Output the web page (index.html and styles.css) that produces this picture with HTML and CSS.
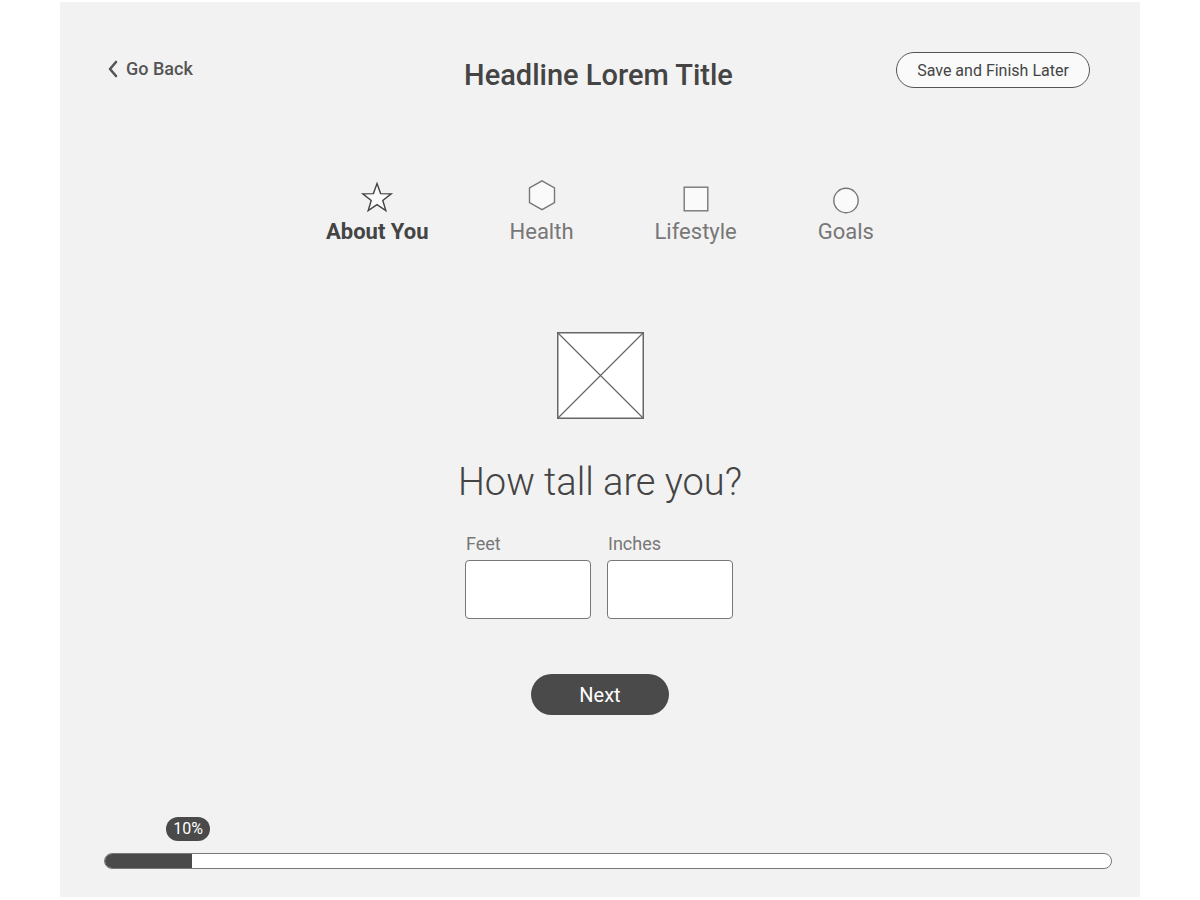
FILE: index.html
```html
<!DOCTYPE html>
<html lang="en">
<head>
    <meta charset="UTF-8">
    <meta name="viewport" content="width=device-width, initial-scale=1.0">
    <title>Headline Lorem Title</title>
    <link rel="stylesheet" href="styles.css">
</head>
<body>
    <div class="panel">
        <header class="top-bar">
            <a class="back-link" href="#">
                <svg width="12" height="18" viewBox="0 0 12 18"><path d="M9 2 L3 9 L9 16" fill="none" stroke="#555" stroke-width="2.6" stroke-linecap="round" stroke-linejoin="round"/></svg>
                Go Back
            </a>
            <h1 class="title">Headline Lorem Title</h1>
            <div class="top-right">
                <button type="button" class="save-btn">Save and Finish Later</button>
            </div>
        </header>

        <nav class="steps">
            <div class="step active">
                <svg width="34" height="34" viewBox="0 0 34 34"><polygon points="17,3.5 20.6,13.6 31.2,13.9 22.8,20.4 25.8,30.6 17,24.6 8.2,30.6 11.2,20.4 2.8,13.9 13.4,13.6" fill="#fafafa" stroke="#444" stroke-width="1.4" stroke-linejoin="miter"/></svg>
                <span>About You</span>
            </div>
            <div class="step">
                <svg width="34" height="34" viewBox="0 0 34 34"><polygon points="17,0.8 29.5,8 29.5,22.5 17,29.7 4.5,22.5 4.5,8" fill="#fafafa" stroke="#777" stroke-width="1.4"/></svg>
                <span>Health</span>
            </div>
            <div class="step">
                <svg width="34" height="34" viewBox="0 0 34 34"><rect x="5.2" y="7.2" width="23.6" height="23.6" fill="#fafafa" stroke="#777" stroke-width="1.4"/></svg>
                <span>Lifestyle</span>
            </div>
            <div class="step">
                <svg width="34" height="34" viewBox="0 0 34 34"><circle cx="17" cy="20.5" r="12.2" fill="#fafafa" stroke="#777" stroke-width="1.4"/></svg>
                <span>Goals</span>
            </div>
        </nav>

        <main class="question-block">
            <div class="placeholder">
                <svg width="87" height="87" viewBox="0 0 87 87"><rect x="0.75" y="0.75" width="85.5" height="85.5" fill="#fff" stroke="#666" stroke-width="1.5"/><path d="M1 1 L86 86 M86 1 L1 86" stroke="#666" stroke-width="1.2"/></svg>
            </div>
            <h2 class="question">How tall are you?</h2>
            <div class="fields">
                <label class="field">
                    <span>Feet</span>
                    <input type="text">
                </label>
                <label class="field">
                    <span>Inches</span>
                    <input type="text">
                </label>
            </div>
            <button type="button" class="next-btn">Next</button>
        </main>

        <footer class="progress">
            <div class="progress-badge">10%</div>
            <div class="progress-bar">
                <div class="progress-fill" style="width: 87px"></div>
            </div>
        </footer>
    </div>
</body>
</html>
```

FILE: styles.css
```css
body {
    margin: 0;
    background: #fff;
    font-family: Roboto, "Liberation Sans", Arial, sans-serif;
    color: #444;
}
.panel {
    width: 1080px;
    height: 895px;
    margin: 2px 0 0 60px;
    background: #f2f2f2;
    display: flex;
    flex-direction: column;
    box-sizing: border-box;
}
.top-bar {
    display: grid;
    grid-template-columns: 1fr auto 1fr;
    align-items: start;
    margin-top: 50px;
    padding: 0 50px 0 47px;
}
.back-link {
    display: flex;
    align-items: center;
    gap: 7px;
    margin-top: 6px;
    color: #555;
    font-size: 18px;
    line-height: 21px;
    font-weight: 500;
    text-decoration: none;
}
.title {
    margin: 6px 0 0;
    font-size: 29px;
    line-height: 34px;
    font-weight: 500;
    color: #444;
    text-align: center;
}
.top-right {
    display: flex;
    justify-content: flex-end;
}
.save-btn {
    height: 36px;
    width: 194px;
    border: 1px solid #555;
    border-radius: 18px;
    background: #fafafa;
    color: #444;
    font-family: inherit;
    font-size: 16px;
    padding: 0;
}
.steps {
    display: flex;
    justify-content: center;
    gap: 81px;
    margin-top: 88px;
}
.step {
    display: flex;
    flex-direction: column;
    align-items: center;
}
.step svg {
    display: block;
}
.step span {
    margin-top: 5px;
    font-size: 22px;
    line-height: 26px;
    color: #777;
}
.step.active span {
    font-weight: 700;
    color: #444;
}
.question-block {
    display: flex;
    flex-direction: column;
    align-items: center;
    margin-top: 87px;
}
.placeholder svg {
    display: block;
}
.question {
    margin: 40px 0 0;
    font-size: 38px;
    line-height: 46px;
    font-weight: 300;
    color: #444;
}
.fields {
    display: flex;
    gap: 16px;
    margin-top: 28px;
    margin-right: 2px;
}
.field {
    display: flex;
    flex-direction: column;
}
.field span {
    font-size: 18px;
    line-height: 21px;
    color: #777;
    padding-left: 1px;
}
.field input {
    margin-top: 6px;
    width: 126px;
    height: 59px;
    box-sizing: border-box;
    border: 1px solid #777;
    border-radius: 4px;
    background: #fff;
}
.next-btn {
    margin-top: 55px;
    width: 138px;
    height: 41px;
    border: none;
    border-radius: 21px;
    background: #4a4a4a;
    color: #fff;
    font-family: inherit;
    font-size: 20px;
}
.progress {
    margin-top: auto;
    padding: 0 28px 28px 44px;
}
.progress-badge {
    width: 44px;
    height: 24px;
    margin-left: 62px;
    border-radius: 12px;
    background: #4a4a4a;
    color: #fff;
    font-size: 16px;
    line-height: 24px;
    text-align: center;
}
.progress-bar {
    margin-top: 12px;
    height: 16px;
    box-sizing: border-box;
    border: 1px solid #777;
    border-radius: 8px;
    background: #fff;
    overflow: hidden;
}
.progress-fill {
    height: 100%;
    background: #4a4a4a;
}
```
